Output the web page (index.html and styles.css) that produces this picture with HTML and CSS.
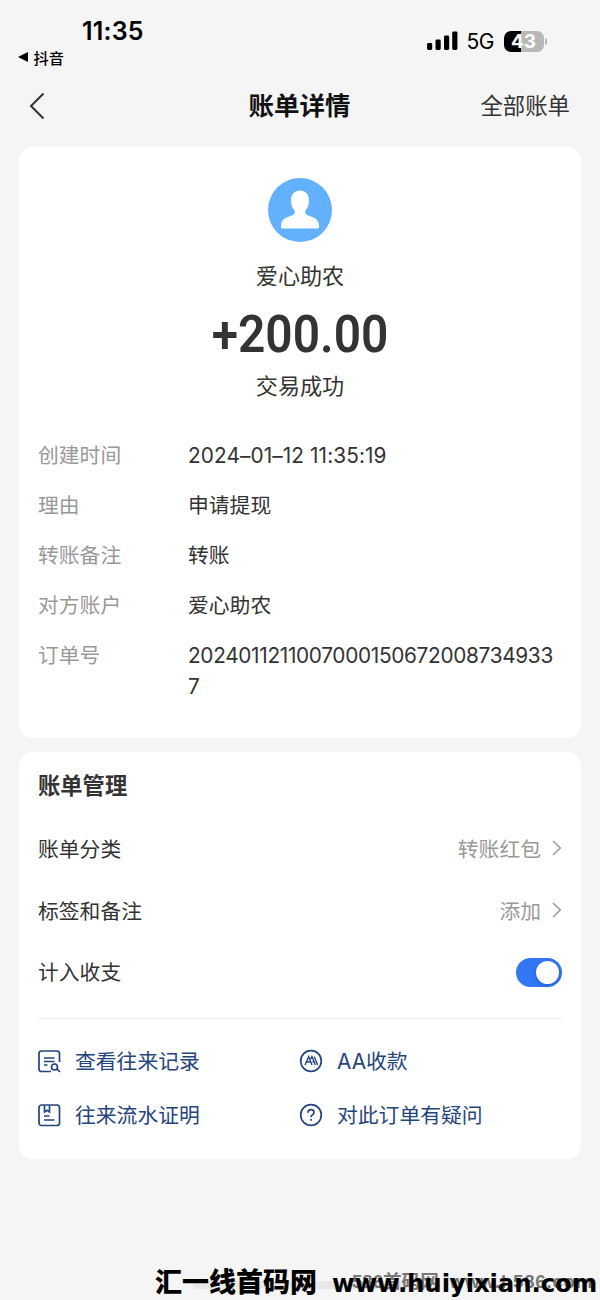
FILE: index.html
```html
<!DOCTYPE html>
<html lang="zh-CN">
<head>
<meta charset="utf-8">
<title>账单详情</title>
<link rel="stylesheet" href="styles.css">
</head>
<body>
<div class="screen">
  <header class="status">
    <div class="status-left">
      <div class="clock">11:35</div>
      <div class="back-app"><svg width="10" height="10" viewBox="0 0 10 10"><path d="M0 5L10 0V10Z" fill="#000"/></svg><span>抖音</span></div>
    </div>
    <div class="status-right">
      <svg class="signal" width="31" height="20" viewBox="0 0 31 20"><rect x="0" y="12" width="5.2" height="7" rx="1.4"/><rect x="8.5" y="8.5" width="5.2" height="10.5" rx="1.4"/><rect x="17" y="4.5" width="5.2" height="14.5" rx="1.4"/><rect x="25.2" y="0.5" width="5.2" height="18.5" rx="1.4"/></svg>
      <span class="network">5G</span>
      <span class="battery">43</span><span class="battery-cap"></span>
    </div>
  </header>
  <nav class="nav">
    <svg class="nav-back" width="16" height="28" viewBox="0 0 16 28"><path d="M14.5 1.5L2 14L14.5 26.5" fill="none" stroke="#333" stroke-width="2"/></svg>
    <h1 class="nav-title">账单详情</h1>
    <span class="nav-all">全部账单</span>
  </nav>

  <section class="card bill">
    <svg class="avatar" width="64" height="64" viewBox="0 0 64 64"><circle cx="32" cy="32" r="32" fill="#63b0fc"/><path d="M32 12.5C26.5 12.5 23 16.5 23 22C23 27 24.5 30.5 26.7 32.5C27.2 35 26.3 36.4 24.2 37.3L18 39.8C14.5 41.4 13 44 13 47.5V49Q13 50.5 14.5 50.5H49.5Q51 50.5 51 49V47.5C51 44 49.5 41.4 46 39.8L39.8 37.3C37.7 36.4 36.8 35 37.3 32.5C39.5 30.5 41 27 41 22C41 16.5 37.5 12.5 32 12.5Z" fill="#fff"/></svg>
    <div class="payee">爱心助农</div>
    <div class="amount">+200.00</div>
    <div class="state">交易成功</div>
    <dl class="details">
      <dt>创建时间</dt><dd class="date">2024–01–12 11:35:19</dd>
      <dt>理由</dt><dd>申请提现</dd>
      <dt>转账备注</dt><dd>转账</dd>
      <dt>对方账户</dt><dd>爱心助农</dd>
      <dt>订单号</dt><dd class="order">20240112110070001506720087349337</dd>
    </dl>
  </section>

  <section class="card manage">
    <h2 class="manage-title">账单管理</h2>
    <div class="row"><span>账单分类</span><span class="value">转账红包<svg width="10" height="16" viewBox="0 0 10 16"><path d="M1 1L8.3 8L1 15" fill="none" stroke="#999" stroke-width="1.5"/></svg></span></div>
    <div class="row"><span>标签和备注</span><span class="value">添加<svg width="10" height="16" viewBox="0 0 10 16"><path d="M1 1L8.3 8L1 15" fill="none" stroke="#999" stroke-width="1.5"/></svg></span></div>
    <div class="row"><span class="row-last">计入收支</span><span class="toggle"><span class="knob"></span></span></div>
    <div class="links">
      <a class="link"><svg width="24" height="24" viewBox="0 0 24 24"><path d="M14 22.5H4.5Q2 22.5 2 20V4.5Q2 2 4.5 2H20Q22.5 2 22.5 4.5V13M7 9H17.5M7 12.5H17.5M7 16H10.5"/><circle cx="17.5" cy="18" r="3"/><path d="M19.8 20.2L23 22.8"/></svg><span>查看往来记录</span></a>
      <a class="link"><svg width="24" height="24" viewBox="0 0 24 24"><circle cx="12" cy="12" r="10.3"/><path d="M6 16L9.7 7.6L13 16M7.4 13H11.8M11.8 10L12.9 7.6L16.4 16M15.2 7.6L18.6 16M13.5 13H15" stroke-width="1.4"/></svg><span>AA收款</span></a>
      <a class="link"><svg width="24" height="24" viewBox="0 0 24 24"><rect x="2" y="2" width="20.5" height="20.5" rx="2.5"/><path d="M7.5 2.5V9L10 7.3L12.5 9V2.5M7 13H12.5M7 17H17.5"/></svg><span>往来流水证明</span></a>
      <a class="link"><svg width="24" height="24" viewBox="0 0 24 24"><circle cx="12" cy="12" r="10.3"/><path d="M9 9.8C9 7.8 10.3 6.7 12 6.7C13.8 6.7 15 7.9 15 9.5C15 11.7 12 11.6 12 14.3M12 16V17.8"/></svg><span>对此订单有疑问</span></a>
    </div>
  </section>

  <div class="home-bar"></div>
  <div class="mark-under"><span class="under-a">586首码网</span><span class="under-b">www.h586.com</span></div>
  <div class="mark"><span class="mark-name">汇一线首码网</span><span class="mark-url">www.huiyixian.com</span></div>
</div>
</body>
</html>
```
FILE: styles.css
```css
* { box-sizing: border-box; }
body {
  margin: 0;
  background: #f5f5f5;
  color: #333;
  font-family: Inter, "Noto Sans CJK SC", sans-serif;
}
.screen { position: relative; width: 600px; height: 1300px; overflow: hidden; }

.status { display: flex; justify-content: space-between; height: 74px; color: #000; }
.status-left { padding: 16px 0 0 18px; }
.clock { padding-left: 64px; font-size: 25px; line-height: 30px; font-weight: 600; letter-spacing: 0.2px; }
.back-app { display: flex; align-items: center; gap: 5.5px; height: 21px; font-size: 15.2px; font-weight: 500; }
.status-right { display: flex; align-items: center; height: 22px; margin: 30px 53px 0 0; }
.network { margin-left: 9px; width: 37px; font-size: 21px; letter-spacing: -0.4px; }
.signal { flex: none; }
.battery {
  width: 40px; height: 21px; border-radius: 7px;
  background: linear-gradient(90deg, #000 43%, #b8b8b8 43%);
  color: #fff; font-size: 19px; line-height: 21px; font-weight: 700; text-align: center;
}
.battery-cap { width: 2.5px; height: 7px; margin-left: 1px; border-radius: 0 3px 3px 0; background: #b8b8b8; }

.nav { display: grid; grid-template-columns: 120px 1fr 120px; align-items: center; height: 63px; padding: 0 30px 0 29px; }
.nav-title { margin: 0; font-size: 25.5px; line-height: 36px; font-weight: 700; color: #111; text-align: center; }
.nav-all { padding-bottom: 3px; font-size: 22.4px; text-align: right; }

.card { margin: 0 19px; border-radius: 14px; background: #fff; }
.bill { display: flex; flex-direction: column; align-items: center; height: 591px; margin-top: 10px; padding: 31px 19px 0; }
.payee, .state { font-size: 22.1px; line-height: 32px; }
.payee { margin-top: 18px; }
.amount { height: 52px; margin-top: 17px; font: 600 51.5px/52px Roboto, sans-serif; transform: scaleX(0.93); }
.state { margin-top: 9px; }

.details {
  display: grid; grid-template-columns: 150px 374px; row-gap: 18.9px;
  width: 100%; margin: 38px 0 0; font-size: 20.8px; line-height: 31px;
}
.details dt { color: #999; }
.details dd { margin: 0; }
.details .date { letter-spacing: 0.1px; }
.order { width: 368px; letter-spacing: -0.32px; word-break: break-all; }

.manage { height: 407px; margin-top: 14px; padding: 17px 19px 0; }
.manage-title { margin: 0 0 14px; font-size: 22.3px; line-height: 34px; font-weight: 600; }
.row { display: flex; align-items: center; justify-content: space-between; height: 62px; font-size: 20.8px; }
.row > span:first-child, .value { padding-bottom: 1px; }
.row > .row-last:first-child { padding-bottom: 3px; }
.value { display: flex; align-items: center; gap: 11px; color: #999; }
.value svg { margin-top: 1px; }
.toggle { display: flex; justify-content: flex-end; width: 46px; height: 29px; padding: 3px; border-radius: 15px; background: #3477f5; }
.knob { width: 23px; height: 23px; border-radius: 50%; background: #fff; box-shadow: 0 1px 4px #173d9988; }
.links {
  display: grid; grid-template-columns: 262px 1fr; grid-auto-rows: 54px;
  margin-top: 15px; padding-top: 15px; border-top: 1px solid #eaeaea;
}
.link { display: flex; align-items: center; gap: 14px; color: #25457d; font-size: 20.8px; }
.link span { padding-bottom: 2px; }
.link svg { flex: none; margin-left: -1px; fill: none; stroke: #25457d; stroke-width: 1.7; }

.home-bar { position: absolute; left: 193px; top: 1281px; width: 215px; height: 8px; border-radius: 4px; background: #e8e8e8; }
.mark-under { position: absolute; left: 352px; top: 1270px; display: flex; gap: 11px; color: #777; font: 700 18.6px/24px "Liberation Sans", "Noto Sans CJK SC", sans-serif; white-space: nowrap; }
.under-b { letter-spacing: 0.8px; }
.mark { position: absolute; left: 155px; top: 1265px; display: flex; color: #000; line-height: 32px; white-space: nowrap; }
.mark-name { width: 177px; font-size: 27px; font-weight: 900; font-family: "Noto Sans CJK SC", sans-serif; }
.mark-url { padding-top: 2px; font: 700 24.5px/33px "DejaVu Sans", sans-serif; letter-spacing: -0.15px; }
```
